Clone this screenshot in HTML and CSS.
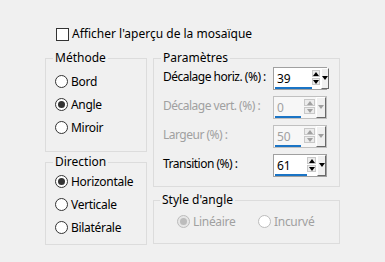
FILE: index.html
```html
<!DOCTYPE html>
<html lang="fr">
<head>
  <meta charset="UTF-8" />
  <title>Mosaïque</title>
  <link rel="stylesheet" href="styles.css">
</head>
<body>
  <div class="dialog">
    <div class="check-row"><span class="checkbox"></span>Afficher l'aperçu de la mosaïque</div>

    <div class="columns">
      <div class="col-left">
        <fieldset class="group group-method">
          <legend>Méthode</legend>
          <div class="radio-row"><span class="radio"></span>Bord</div>
          <div class="radio-row"><span class="radio checked"></span>Angle</div>
          <div class="radio-row"><span class="radio"></span>Miroir</div>
        </fieldset>

        <fieldset class="group group-direction">
          <legend>Direction</legend>
          <div class="radio-row"><span class="radio checked"></span>Horizontale</div>
          <div class="radio-row"><span class="radio"></span>Verticale</div>
          <div class="radio-row"><span class="radio"></span>Bilatérale</div>
        </fieldset>
      </div>

      <div class="col-right">
        <fieldset class="group group-params">
          <legend>Paramètres</legend>
          <div class="param-row">
            <span class="param-label">Décalage horiz. (%) :</span>
            <div class="spin">
              <div class="spin-field"><span class="spin-value">39</span><span class="spin-bar" style="width: 37px"></span></div>
              <div class="spin-arrows"><span class="spin-up"></span><span class="spin-down"></span></div>
              <div class="spin-drop"><span class="drop-arrow"></span></div>
            </div>
          </div>
          <div class="param-row disabled">
            <span class="param-label">Décalage vert. (%) :</span>
            <div class="spin">
              <div class="spin-field"><span class="spin-value">0</span><span class="spin-bar" style="width: 26px"></span></div>
              <div class="spin-arrows"><span class="spin-up"></span><span class="spin-down"></span></div>
              <div class="spin-drop"><span class="drop-arrow"></span></div>
            </div>
          </div>
          <div class="param-row disabled">
            <span class="param-label">Largeur (%) :</span>
            <div class="spin">
              <div class="spin-field"><span class="spin-value">50</span><span class="spin-bar" style="width: 26px"></span></div>
              <div class="spin-arrows"><span class="spin-up"></span><span class="spin-down"></span></div>
              <div class="spin-drop"><span class="drop-arrow"></span></div>
            </div>
          </div>
          <div class="param-row">
            <span class="param-label">Transition (%) :</span>
            <div class="spin">
              <div class="spin-field"><span class="spin-value">61</span><span class="spin-bar" style="width: 32px"></span></div>
              <div class="spin-arrows"><span class="spin-up"></span><span class="spin-down"></span></div>
              <div class="spin-drop"><span class="drop-arrow"></span></div>
            </div>
          </div>
        </fieldset>

        <fieldset class="group group-style">
          <legend>Style d'angle</legend>
          <div class="style-row">
            <div class="radio-row disabled first"><span class="radio checked"></span>Linéaire</div>
            <div class="radio-row disabled"><span class="radio"></span>Incurvé</div>
          </div>
        </fieldset>
      </div>
    </div>
  </div>
</body>
</html>
```

FILE: styles.css
```css
body {
  margin: 0;
  background: #f0f0f0;
  color: #000;
  font-family: "Noto Sans", sans-serif;
  font-size: 12px;
  line-height: 16px;
}

.dialog {
  padding: 26px 0 0 45px;
}

.check-row {
  display: flex;
  align-items: center;
  gap: 3px;
  margin-left: 11px;
  height: 16px;
}

.checkbox {
  width: 13px;
  height: 13px;
  box-sizing: border-box;
  border: 1px solid #333;
  background: #fff;
}

.columns {
  display: flex;
  gap: 6px;
  margin-top: 8px;
}

.col-left,
.col-right {
  display: flex;
  flex-direction: column;
}

.col-left {
  width: 102px;
  gap: 2px;
}

.col-right {
  width: 187px;
  gap: 5px;
}

.group {
  margin: 0;
  min-width: 0;
  border: 1px solid #dcdcdc;
  padding: 0 0 0 9px;
}

.group legend {
  padding: 0 2px;
  margin-left: -2px;
}

.group-method {
  padding-top: 4px;
  padding-bottom: 12px;
}

.group-direction {
  padding-bottom: 5px;
}

.group-params {
  padding-top: 1px;
  padding-bottom: 9px;
  display: flex;
  flex-direction: column;
  gap: 6px;
}

.group-style {
  padding: 2px 0 10px 8px;
}

.radio-row {
  display: flex;
  align-items: center;
  gap: 3px;
  height: 23px;
  letter-spacing: -0.3px;
}

.radio {
  width: 13px;
  height: 13px;
  box-sizing: border-box;
  border: 1px solid #333;
  border-radius: 50%;
  background: #fff;
  display: flex;
  align-items: center;
  justify-content: center;
}

.radio.checked::after {
  content: "";
  width: 7px;
  height: 7px;
  border-radius: 50%;
  background: #333;
}

.disabled {
  color: #a0a0a0;
}

.radio-row.disabled .radio {
  border-color: #bcbcbc;
}

.radio-row.disabled .radio.checked {
  background: #e6e6e6;
}

.radio-row.disabled .radio.checked::after {
  background: #bcbcbc;
}

.style-row {
  display: flex;
  margin-left: 15px;
}

.style-row .first {
  width: 81px;
}

.param-row {
  display: flex;
  height: 23px;
}

.param-label {
  width: 110px;
  padding-top: 2px;
  white-space: nowrap;
  letter-spacing: -0.5px;
}

.spin {
  display: flex;
  width: 54px;
  box-sizing: border-box;
  border: 1px solid #a0a0a0;
  background: #fff;
}

.spin-field {
  flex: 1;
  display: flex;
  flex-direction: column;
  padding-left: 1px;
}

.spin-value {
  margin: 3px 0 0 2px;
}

.spin-bar {
  margin-top: auto;
  height: 2px;
  background: #1a74c5;
}

.spin-arrows {
  width: 11px;
  margin: 2px 1px 0 0;
  display: flex;
  flex-direction: column;
  gap: 1px;
}

.spin-up,
.spin-down {
  height: 7px;
  box-sizing: border-box;
  border: 1px solid #c8c8c8;
  background: #ececec;
  display: flex;
  align-items: center;
  justify-content: center;
}

.spin-up::after {
  content: "";
  border-left: 3px solid transparent;
  border-right: 3px solid transparent;
  border-bottom: 4px solid #000;
}

.spin-down::after {
  content: "";
  border-left: 3px solid transparent;
  border-right: 3px solid transparent;
  border-top: 4px solid #000;
}

.spin-drop {
  width: 10px;
  box-sizing: border-box;
  background: #f0f0f0;
  border-top: 1px solid #fff;
  border-left: 1px solid #fff;
  border-right: 1px solid #696969;
  border-bottom: 1px solid #696969;
  display: flex;
  justify-content: center;
  padding-top: 7px;
}

.drop-arrow {
  border-left: 3px solid transparent;
  border-right: 3px solid transparent;
  border-top: 4px solid #000;
  height: 0;
}

.param-row.disabled .spin {
  border-color: #c0c0c0;
  background: #f7f7f7;
}

.param-row.disabled .spin-up::after {
  border-bottom-color: #a0a0a0;
}

.param-row.disabled .spin-down::after,
.param-row.disabled .drop-arrow {
  border-top-color: #a0a0a0;
}
```
